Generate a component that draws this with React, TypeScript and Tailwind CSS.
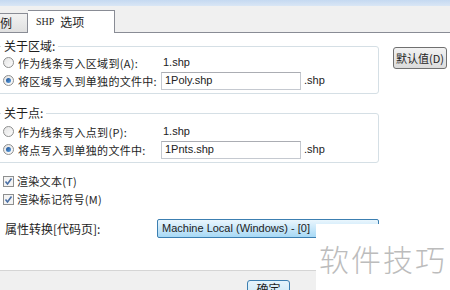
import React from "react";

const font = { fontFamily: '"Noto Sans CJK SC", "Liberation Sans", sans-serif' };
const latin = { fontFamily: '"Liberation Sans", sans-serif' };

function Radio({ checked }: { checked?: boolean }) {
  return (
    <span className="relative inline-flex w-[11px] h-[11px] rounded-full border border-[#8e8f8f] bg-gradient-to-br from-[#e3e3e3] to-[#fdfdfd] items-center justify-center shrink-0">
      {checked && <span className="w-[5px] h-[5px] rounded-full bg-gradient-to-br from-[#1d4f91] to-[#5ea3e4]" />}
    </span>
  );
}

function Check() {
  return (
    <span className="inline-flex w-[11px] h-[11px] border border-[#8e8f8f] bg-[#f4f4f4] items-center justify-center shrink-0">
      <svg width="9" height="9" viewBox="0 0 9 9">
        <path d="M1.5 4.5 L3.5 7 L7.5 1.5" stroke="#4a6fa5" strokeWidth="1.6" fill="none" />
      </svg>
    </span>
  );
}

function Input({ value }: { value: string }) {
  return (
    <div className="w-[140px] h-[18px] border border-[#c5c9d0] border-t-[#abadb3] bg-white flex items-center px-[3px] text-[11px] text-[#222]" style={latin}>
      {value}
    </div>
  );
}

function Group({ label, gapTop, rows }: { label: string; gapTop: number; rows: [string, string, boolean, boolean][] }) {
  return (
    <div className="relative ml-[-6px] w-[385px] border border-[#d5dfe5] rounded-[3px] pb-[4px] pl-[8px]" style={{ paddingTop: gapTop }}>
      <div className="absolute left-[6px] top-[-9px] bg-white px-[3px] text-[12px] leading-[16px] text-[#1e1e1e]">{label}</div>
      <div className="flex flex-col gap-[1px]">
        {rows.map(([t, v, checked, input], i) => (
          <div key={i} className="flex items-center h-[17px]">
            <Radio checked={checked} />
            <span className="ml-[4px] w-[143px] text-[11px] tracking-[0.3px] text-[#1e1e1e] leading-[16px] whitespace-nowrap">{t}</span>
            {input ? (
              <>
                <Input value={v} />
                <span className="ml-[3px] text-[11px] text-[#222]" style={latin}>.shp</span>
              </>
            ) : (
              <span className="ml-[2px] text-[11px] text-[#222]" style={latin}>{v}</span>
            )}
          </div>
        ))}
      </div>
    </div>
  );
}

export default function App() {
  return (
    <div className="relative w-[450px] h-[290px] overflow-hidden bg-white flex flex-col" style={font}>
      <div className="h-[6px] bg-gradient-to-b from-[#c5d9f1] to-[#d9e6f5]" />
      <div className="h-[27px] bg-[#f0f0f0] flex items-end border-b border-[#898c95] relative">
        <div className="ml-[-6px] w-[34px] h-[19px] border border-[#898c95] border-b-0 bg-gradient-to-b from-[#f2f2f2] to-[#e0e0e0] text-[12px] leading-[18px] text-[#1e1e1e] pl-[5px]">例</div>
        <div className="w-[87px] h-[23px] mb-[-1px] border border-[#898c95] border-b-0 border-l-0 bg-white text-[12px] leading-[20px] text-[#1e1e1e] pl-[8px] flex items-center gap-[6px]">
          <span className="text-[10px]" style={{ fontFamily: '"Liberation Serif", serif' }}>SHP</span>
          <span>选项</span>
        </div>
      </div>
      <div className="flex-1 relative flex flex-col pt-[13px]">
        <div className="flex">
          <div className="flex flex-col">
            <Group
              label="关于区域:"
              gapTop={7}
              rows={[
                ["作为线条写入区域到(A):", "1.shp", false, false],
                ["将区域写入到单独的文件中:", "1Poly.shp", true, true],
              ]}
            />
            <div className="h-[19px]" />
            <Group
              label="关于点:"
              gapTop={9}
              rows={[
                ["作为线条写入点到(P):", "1.shp", false, false],
                ["将点写入到单独的文件中:", "1Pnts.shp", true, true],
              ]}
            />
          </div>
          <div className="ml-[14px] mt-[1px] w-[54px] h-[22px] border border-[#707070] rounded-[3px] bg-gradient-to-b from-[#f2f2f2] to-[#dcdcdc] text-[11px] leading-[20px] text-[#1e1e1e] flex items-center justify-center whitespace-nowrap">
            默认值(D)
          </div>
        </div>
        <div className="mt-[10px] flex flex-col gap-[2px] pl-[3px]">
          <div className="flex items-center h-[16px] gap-[3px]">
            <Check />
            <span className="text-[11px] tracking-[0.3px] text-[#1e1e1e]">渲染文本(T)</span>
          </div>
          <div className="flex items-center h-[16px] gap-[3px]">
            <Check />
            <span className="text-[11px] tracking-[0.3px] text-[#1e1e1e]">渲染标记符号(M)</span>
          </div>
        </div>
        <div className="mt-[12px] flex items-center">
          <span className="ml-[5px] w-[152px] text-[12px] text-[#1e1e1e]">属性转换[代码页]:</span>
          <div className="w-[222px] h-[19px] border border-[#3c7fb1] rounded-[2px] bg-gradient-to-b from-[#eaf6fd] to-[#a7d9f5] text-[11px] pl-[4px] leading-[17px] text-[#222]" style={latin}>
            Machine Local (Windows) - [0]
          </div>
        </div>
      </div>
      <div className="h-[20px] bg-[#f0f0f0] border-t border-[#d5d5d5] relative">
        <div className="absolute left-[247px] top-[9px] w-[43px] h-[22px] border border-[#3c7fb1] rounded-[3px] bg-gradient-to-b from-[#e5f4fc] to-[#c4e5f6] text-[12px] text-center leading-[16px] text-[#1e1e1e]">
          确定
        </div>
      </div>
      <div className="absolute left-[316px] top-[224px] w-[134px] h-[66px] bg-white flex items-center justify-center">
        <span className="text-[30px] font-light text-[#bcbcbc] tracking-[2px] leading-none mt-[2px]">软件技巧</span>
      </div>
    </div>
  );
}
